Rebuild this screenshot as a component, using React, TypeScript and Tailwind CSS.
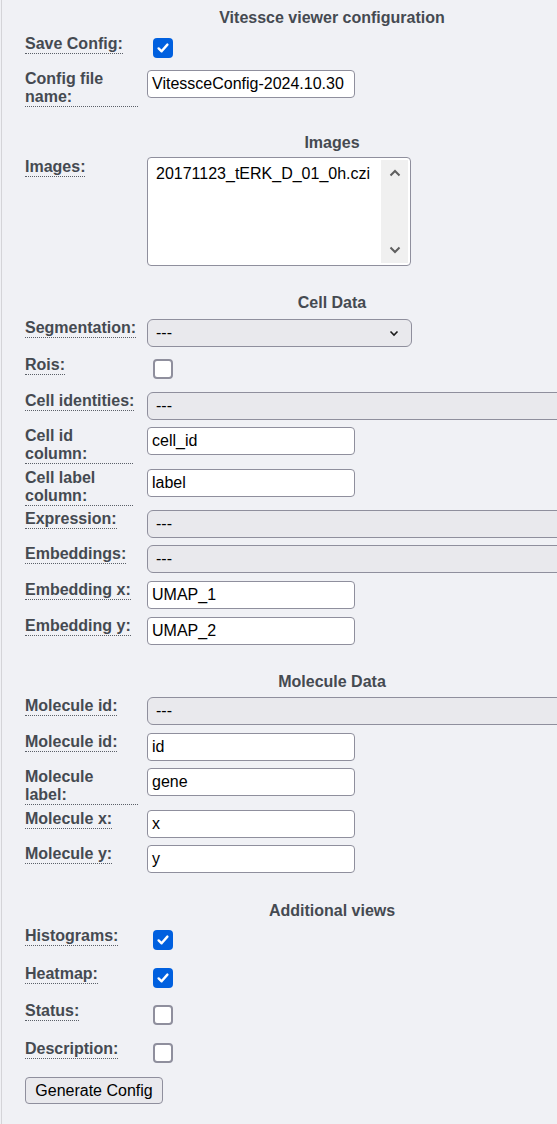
import React from "react";

const LABEL =
  "block w-fit border-b border-dotted border-[#5b6068] font-bold leading-[18px] text-[#454a51]";

function Label({ children, max }: { children: React.ReactNode; max: string }) {
  return (
    <div className="w-[122px] shrink-0 pt-[2px]">
      <span className={`${LABEL} ${max}`}>{children}</span>
    </div>
  );
}

function Header({ children, h }: { children: React.ReactNode; h: string }) {
  return (
    <div className={`${h} text-center font-bold leading-[18px] text-[#454a51]`}>
      {children}
    </div>
  );
}

function Row({
  label,
  h,
  max = "max-w-[113px]",
  children,
}: {
  label: string;
  h: string;
  max?: string;
  children: React.ReactNode;
}) {
  return (
    <div className={`flex items-start ${h}`}>
      <Label max={max}>{label}</Label>
      {children}
    </div>
  );
}

function TextInput({ value }: { value: string }) {
  return (
    <div className="mt-[2px] flex h-[28px] w-[208px] items-center overflow-hidden rounded-[4px] border border-[#8f8f9d] bg-white pl-[4px] leading-[18px] whitespace-nowrap text-black">
      {value}
    </div>
  );
}

function Chevron() {
  return (
    <svg width="10" height="7" viewBox="0 0 10 7" className="shrink-0">
      <path d="M1.5 1.5 L5 5 L8.5 1.5" fill="none" stroke="#1b1b1b" strokeWidth="1.6" />
    </svg>
  );
}

function Select({ wide }: { wide?: boolean }) {
  return (
    <div
      className={`mt-[2px] flex h-[28px] shrink-0 items-center justify-between rounded-[6px] border border-[#8f8f9d] bg-[#e9e9ed] pl-[8px] pr-[12px] leading-[18px] text-black ${
        wide ? "w-[490px]" : "w-[265px]"
      }`}
    >
      <span>---</span>
      {!wide && <Chevron />}
    </div>
  );
}

function Checkbox({ checked }: { checked?: boolean }) {
  if (checked) {
    return (
      <div className="mt-[5px] ml-[6px] flex h-[20px] w-[20px] items-center justify-center rounded-[4px] bg-[#0060df]">
        <svg width="14" height="14" viewBox="0 0 14 14">
          <path
            d="M2.6 7.4 L5.6 10.3 L11.4 3.6"
            fill="none"
            stroke="white"
            strokeWidth="2.4"
            strokeLinecap="round"
            strokeLinejoin="round"
          />
        </svg>
      </div>
    );
  }
  return (
    <div className="mt-[5px] ml-[6px] h-[20px] w-[20px] rounded-[4px] border-2 border-[#8f8f9d] bg-white" />
  );
}

export default function App() {
  return (
    <div className="min-h-screen w-full overflow-hidden bg-[#f0f1f5] font-['Liberation_Sans',Arial,sans-serif] text-[16px]">
      <div className="ml-px min-h-[1124px] border-l border-[#d4d4d8] pl-[23px] pt-[9px]">
        <div className="w-[614px]">
          <Header h="h-[24px]">Vitessce viewer configuration</Header>

          <Row label="Save Config:" h="h-[35px]">
            <Checkbox checked />
          </Row>
          <Row label="Config file name:" h="h-[66px]">
            <TextInput value="VitessceConfig-2024.10.30" />
          </Row>

          <Header h="h-[22px]">Images</Header>
          <Row label="Images:" h="h-[138px]">
            <div className="mt-[1px] flex h-[109px] w-[264px] rounded-[4px] border border-[#8f8f9d] bg-white">
              <div className="flex-1 pl-[8px] pt-[7px] leading-[18px] whitespace-nowrap text-black">
                20171123_tERK_D_01_0h.czi
              </div>
              <div className="my-[2px] mr-[2px] flex w-[27px] flex-col items-center justify-between bg-[#f0f0f0] py-[9px]">
                <svg width="12" height="8" viewBox="0 0 12 8">
                  <path d="M1.5 6.5 L6 2 L10.5 6.5" fill="none" stroke="#5f5f5f" strokeWidth="2" />
                </svg>
                <svg width="12" height="8" viewBox="0 0 12 8">
                  <path d="M1.5 1.5 L6 6 L10.5 1.5" fill="none" stroke="#5f5f5f" strokeWidth="2" />
                </svg>
              </div>
            </div>
          </Row>

          <Header h="h-[23px]">Cell Data</Header>
          <Row label="Segmentation:" h="h-[37px]">
            <Select />
          </Row>
          <Row label="Rois:" h="h-[36px]">
            <Checkbox />
          </Row>
          <Row label="Cell identities:" h="h-[35px]">
            <Select wide />
          </Row>
          <Row label="Cell id column:" h="h-[42px]" max="max-w-[108px]">
            <TextInput value="cell_id" />
          </Row>
          <Row label="Cell label column:" h="h-[41px]" max="max-w-[108px]">
            <TextInput value="label" />
          </Row>
          <Row label="Expression:" h="h-[35px]">
            <Select wide />
          </Row>
          <Row label="Embeddings:" h="h-[36px]">
            <Select wide />
          </Row>
          <Row label="Embedding x:" h="h-[36px]">
            <TextInput value="UMAP_1" />
          </Row>
          <Row label="Embedding y:" h="h-[58px]">
            <TextInput value="UMAP_2" />
          </Row>

          <Header h="h-[22px]">Molecule Data</Header>
          <Row label="Molecule id:" h="h-[36px]">
            <Select wide />
          </Row>
          <Row label="Molecule id:" h="h-[35px]">
            <TextInput value="id" />
          </Row>
          <Row label="Molecule label:" h="h-[42px]">
            <TextInput value="gene" />
          </Row>
          <Row label="Molecule x:" h="h-[35px]">
            <TextInput value="x" />
          </Row>
          <Row label="Molecule y:" h="h-[59px]">
            <TextInput value="y" />
          </Row>

          <Header h="h-[23px]">Additional views</Header>
          <Row label="Histograms:" h="h-[38px]">
            <Checkbox checked />
          </Row>
          <Row label="Heatmap:" h="h-[37px]">
            <Checkbox checked />
          </Row>
          <Row label="Status:" h="h-[38px]">
            <Checkbox />
          </Row>
          <Row label="Description:" h="h-[39px]">
            <Checkbox />
          </Row>

          <button className="flex h-[27px] w-[138px] items-center justify-center rounded-[4px] border border-[#8f8f9d] bg-[#e9e9ed] leading-[18px] text-black">
            Generate Config
          </button>
        </div>
      </div>
    </div>
  );
}
